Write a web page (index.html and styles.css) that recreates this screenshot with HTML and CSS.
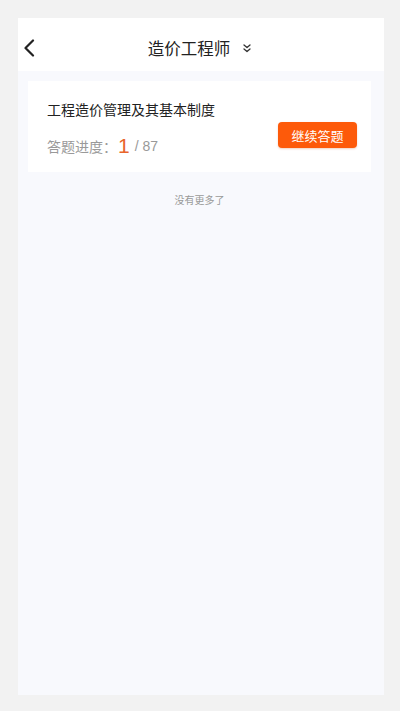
FILE: index.html
```html
<!DOCTYPE html>
<html lang="zh-CN">
<head>
<meta charset="utf-8">
<title>造价工程师</title>
<link rel="stylesheet" href="styles.css">
</head>
<body>
<div class="phone">
  <header class="topbar">
    <button class="back" aria-label="返回">
      <svg width="12" height="18" viewBox="0 0 12 18"><path d="M10 1.5 L2.5 9 L10 16.5" fill="none" stroke="#222" stroke-width="2.2" stroke-linecap="round" stroke-linejoin="round"/></svg>
    </button>
    <div class="title-group">
      <span class="title">造价工程师</span>
      <svg class="dd" width="8" height="9" viewBox="0 0 8 9"><path d="M1 1 L4 3.6 L7 1 M1 5 L4 7.6 L7 5" fill="none" stroke="#333" stroke-width="1.3" stroke-linecap="round" stroke-linejoin="round"/></svg>
    </div>
  </header>
  <main class="content">
    <div class="card">
      <div class="info">
        <div class="chapter">工程造价管理及其基本制度</div>
        <div class="progress"><span class="label">答题进度：</span><span class="cur">1</span><span class="total">/ 87</span></div>
      </div>
      <button class="go">继续答题</button>
    </div>
    <div class="nomore">没有更多了</div>
  </main>
</div>
</body>
</html>
```

FILE: styles.css
```css
* { box-sizing: border-box; }
html, body { margin: 0; padding: 0; }
body {
  background: #f2f2f2;
  font-family: "Noto Sans CJK SC", "Noto Sans", sans-serif;
  width: 400px;
  height: 711px;
  padding: 18px 16px 16px 18px;
}
.phone {
  width: 366px;
  height: 677px;
  background: #f8f9fd;
  display: flex;
  flex-direction: column;
}
.topbar {
  height: 53px;
  background: #fff;
  padding-top: 7px;
  display: flex;
  align-items: center;
}
.back {
  border: 0;
  background: none;
  padding: 0;
  margin-left: 4px;
  width: 14px;
  height: 46px;
  display: flex;
  align-items: center;
  justify-content: center;
}
.title-group {
  flex: 1;
  display: flex;
  align-items: center;
  justify-content: center;
  margin-right: 21px;
  height: 46px;
}
.title {
  font-size: 16.5px;
  color: #222;
  line-height: 24px;
}
.dd { margin-left: 13px; }
.content {
  flex: 1;
  padding: 10px 13px 0 10px;
}
.card {
  background: #fff;
  height: 91px;
  padding: 18px 14px 12px 19px;
  display: flex;
  justify-content: space-between;
}
.info { display: flex; flex-direction: column; }
.chapter {
  font-size: 14px;
  line-height: 20px;
  color: #222;
}
.progress {
  margin-top: 13px;
  height: 28px;
  display: flex;
  align-items: center;
  color: #999;
  font-size: 14px;
}
.label { font-size: 14px; }
.cur {
  color: #e8652b;
  font-size: 21px;
  font-family: "Liberation Sans", "Noto Sans", sans-serif;
  margin-left: 1px;
  margin-right: 5px;
  line-height: 28px;
}
.total {
  font-family: "Liberation Sans", "Noto Sans", sans-serif;
  font-size: 14px;
  color: #999;
}
.go {
  align-self: flex-end;
  margin-bottom: 12px;
  width: 79px;
  height: 26px;
  border: 0;
  border-radius: 4px;
  background: #fd5a0a;
  color: #fff;
  font-family: "Noto Sans CJK SC", sans-serif;
  font-size: 13px;
  padding: 0;
  box-shadow: 0 1px 2px rgba(200, 70, 0, 0.25);
}
.nomore {
  text-align: center;
  font-size: 10px;
  line-height: 14px;
  color: #999;
  margin-top: 21px;
}
```
